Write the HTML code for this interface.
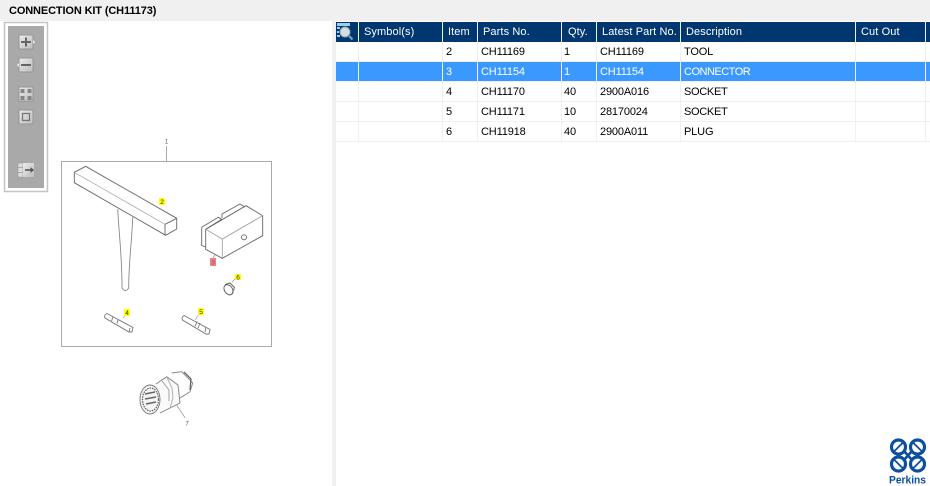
<!DOCTYPE html>
<html>
<head>
<meta charset="utf-8">
<style>
html,body{margin:0;padding:0;width:930px;height:486px;overflow:hidden;background:#f0f0f0;font-family:"Liberation Sans",sans-serif}
#title{position:absolute;left:9px;top:4px;font-size:11px;font-weight:bold;color:#000;white-space:nowrap;line-height:14px;letter-spacing:-.13px}
#left{position:absolute;left:0;top:21px;width:332px;height:465px;background:#fff}
#right{position:absolute;left:336px;top:21px;width:594px;height:465px;background:#fff}
svg{position:absolute;left:0;top:0}
.c{position:absolute;height:20px;line-height:20px;font-size:11px;white-space:nowrap;letter-spacing:-.15px;color:#000}
.h{color:#fff;font-size:11px;line-height:21px;letter-spacing:.1px;top:22px}
.s{color:#fff}
.b{position:absolute}
</style>
</head>
<body>
<div id="left"></div>
<div id="right"></div>
<div id="title">CONNECTION KIT (CH11173)</div>

<!-- table backgrounds -->
<div class="b" style="left:336px;top:22px;width:594px;height:20px;background:#003770"></div>
<div class="b" style="left:336px;top:62px;width:594px;height:19px;background:#3b98ff"></div>
<div class="b" style="left:336px;top:61px;width:594px;height:1px;background:#f0f0f0"></div>
<div class="b" style="left:336px;top:81px;width:594px;height:1px;background:#f0f0f0"></div>
<div class="b" style="left:336px;top:101px;width:594px;height:1px;background:#f0f0f0"></div>
<div class="b" style="left:336px;top:121px;width:594px;height:1px;background:#f0f0f0"></div>
<div class="b" style="left:336px;top:141px;width:594px;height:1px;background:#f0f0f0"></div>
<!-- column separators -->
<div class="b" style="left:358px;top:22px;width:1px;height:120px;background:#f0f0f0"></div>
<div class="b" style="left:442px;top:22px;width:1px;height:120px;background:#f0f0f0"></div>
<div class="b" style="left:477px;top:22px;width:1px;height:120px;background:#f0f0f0"></div>
<div class="b" style="left:561px;top:22px;width:1px;height:120px;background:#f0f0f0"></div>
<div class="b" style="left:596px;top:22px;width:1px;height:120px;background:#f0f0f0"></div>
<div class="b" style="left:680px;top:22px;width:1px;height:120px;background:#f0f0f0"></div>
<div class="b" style="left:855px;top:22px;width:1px;height:120px;background:#f0f0f0"></div>
<div class="b" style="left:925px;top:22px;width:1px;height:120px;background:#f0f0f0"></div>

<!-- header -->
<div class="c h" style="left:364px">Symbol(s)</div>
<div class="c h" style="left:448px">Item</div>
<div class="c h" style="left:483px">Parts No.</div>
<div class="c h" style="left:568px">Qty.</div>
<div class="c h" style="left:602px">Latest Part No.</div>
<div class="c h" style="left:686px">Description</div>
<div class="c h" style="left:861px">Cut Out</div>

<!-- rows -->
<div class="c" style="left:446px;top:42px">2</div><div class="c" style="left:481px;top:42px">CH11169</div><div class="c" style="left:564px;top:42px">1</div><div class="c" style="left:600px;top:42px">CH11169</div><div class="c" style="left:684px;top:42px">TOOL</div>
<div class="c s" style="left:446px;top:62px">3</div><div class="c s" style="left:481px;top:62px">CH11154</div><div class="c s" style="left:564px;top:62px">1</div><div class="c s" style="left:600px;top:62px">CH11154</div><div class="c s" style="left:684px;top:62px;letter-spacing:-.5px">CONNECTOR</div>
<div class="c" style="left:446px;top:82px">4</div><div class="c" style="left:481px;top:82px">CH11170</div><div class="c" style="left:564px;top:82px">40</div><div class="c" style="left:600px;top:82px">2900A016</div><div class="c" style="left:684px;top:82px;letter-spacing:-.3px">SOCKET</div>
<div class="c" style="left:446px;top:102px">5</div><div class="c" style="left:481px;top:102px">CH11171</div><div class="c" style="left:564px;top:102px">10</div><div class="c" style="left:600px;top:102px">28170024</div><div class="c" style="left:684px;top:102px;letter-spacing:-.3px">SOCKET</div>
<div class="c" style="left:446px;top:122px">6</div><div class="c" style="left:481px;top:122px">CH11918</div><div class="c" style="left:564px;top:122px">40</div><div class="c" style="left:600px;top:122px">2900A011</div><div class="c" style="left:684px;top:122px">PLUG</div>

<svg width="930" height="486" viewBox="0 0 930 486" xmlns="http://www.w3.org/2000/svg">
<defs>
<linearGradient id="btn" x1="0" y1="0" x2="1" y2="1"><stop offset="0" stop-color="#ececec"/><stop offset="1" stop-color="#bdbdbd"/></linearGradient>
</defs>
<!-- search icon in header -->
<rect x="337" y="23" width="13" height="3" fill="#9fd0f0"/>
<rect x="337" y="27" width="3" height="2" fill="#9fd0f0"/>
<rect x="337" y="31" width="2" height="2" fill="#9fd0f0"/>
<rect x="337" y="35" width="3" height="2" fill="#9fd0f0"/>
<circle cx="345" cy="32" r="5" fill="#d8dde0" stroke="#8fa5b5"/>
<path d="M349 36l3.500 3.500" stroke="#6fa8d0" stroke-width="2"/>

<!-- toolbar -->
<rect x="4.500" y="22.500" width="43" height="169" fill="#fff" stroke="#c4c4c4" stroke-width="1.500"/>
<rect x="8" y="26" width="36" height="162" fill="#a9a9a9"/>
<g stroke="#959595" fill="url(#btn)">
<rect x="19" y="35" width="14" height="14" rx="1"/>
<rect x="19" y="58" width="14" height="14" rx="1"/>
<rect x="19" y="87" width="14" height="14"/>
<rect x="19" y="110" width="14" height="14"/>
</g>
<path d="M33 40l2 2-2 2z" fill="#eee"/>
<path d="M19 63l-2 2 2 2z" fill="#eee"/>
<path d="M21 42h10M26 37.500v9" stroke="#666" stroke-width="2" fill="none"/>
<path d="M21 65h10" stroke="#666" stroke-width="2" fill="none"/>
<g fill="#858585"><rect x="20.500" y="89" width="4" height="4"/><rect x="27.500" y="89" width="4" height="4"/><rect x="20.500" y="96" width="4" height="4"/><rect x="27.500" y="96" width="4" height="4"/></g>
<rect x="22.500" y="113.500" width="7" height="7" fill="none" stroke="#777" stroke-width="1.300"/>
<rect x="18" y="163" width="5" height="14" fill="#ddd" stroke="#999" stroke-width=".6"/>
<path d="M18 167.500h5M18 172.500h5" stroke="#999" stroke-width=".8"/>
<rect x="23" y="163" width="11" height="14" fill="url(#btn)"/>
<path d="M25 170h7" stroke="#555" stroke-width="1.600"/>
<path d="M30.500 167l3.500 3-3.500 3z" fill="#555"/>

<!-- drawing frame -->
<rect x="61.500" y="161.500" width="210" height="185" fill="none" stroke="#aaa"/>
<path d="M166.500 146v15" stroke="#aaa"/>
<g font-family="Liberation Sans,sans-serif" font-size="6.500" fill="#666" text-anchor="middle">
<text x="166.500" y="143.500">1</text>
<text x="187" y="425.500">7</text>
</g>

<!-- T tool -->
<g fill="none" stroke="#666" stroke-width=".9">
<path d="M74.300 172.300L85.700 166.300 176.700 218.300V229L165.700 235.300 74.300 182.700Z"/>
<path d="M165 224.300L176.700 218.300"/>
<path d="M165 224.300V235"/>
<path d="M117.700 209C119 235 122 255 122 288Q125.300 293 128.700 288C128.700 262 132 240 132.700 217.300" stroke="#888"/>
</g>
<path d="M74.300 172.300L165 224.300" stroke="#aaa" stroke-width=".8" fill="none"/>

<!-- connector block -->
<g fill="none" stroke="#666" stroke-width=".9">
<path d="M205.700 229.300L246 205.700 262.700 215.700V235.700L222.300 258.300 205.700 249.300Z"/>
<path d="M201.700 227.300L218.300 217.300 221.700 219.300 205.700 229.300M201.700 227.300V245.500L205.700 247"/>
<path d="M222 218V214L240 204 245 207"/>
<circle cx="244" cy="237.300" r="2.500"/>
</g>
<path d="M205.700 229.300L222.300 239 262.700 215.700M222.300 239V258" stroke="#999" stroke-width=".8" fill="none"/>
<path d="M213 258l2-3" stroke="#777" stroke-width=".6"/>

<!-- plug 6 -->
<g fill="none" stroke="#666" stroke-width="1">
<ellipse cx="228.500" cy="289.800" rx="4" ry="5.500" transform="rotate(-35 228.500 289.800)"/>
<path d="M225 284.500L230 283 234.500 287.500 232 294"/>
<path d="M232 282l3-3" stroke="#888" stroke-width=".6"/>
</g>

<!-- pins -->
<g fill="none" stroke="#777" stroke-width=".9">
<path d="M107 313.500L133 327.500 132 332 129 332 105 318Q103.500 315 107 313.500Z"/>
<path d="M113 317l-1.500 4M118 320l-1 3.500M130 328l-1 4"/>
<path d="M184 315.500L210 329.500 209 334 206 334 182.500 320Q181 317 184 315.500Z"/>
<path d="M197 321.500l-2 5M200 323l-2 5M206 327l-1 5"/>
<path d="M126 314l-3 4M199 314l-4 6" stroke="#888" stroke-width=".6"/>
</g>

<!-- connector 7 -->
<g fill="none" stroke="#808080" stroke-width=".9">
<path d="M171.700 373L181.700 371.700 192.700 383 190 391.700 180 398" fill="#fff"/>
<path d="M184 372L191 379 190 390" stroke="#666" stroke-width="1.300"/>
<path d="M156 384L166.700 376.700 178 385 180 403 160 413" fill="#fafafa"/>
<path d="M166.700 376.700L172 388 173 398 170 408" stroke="#aaa"/>
<path d="M162 381L169 390 169 401" stroke="#999"/>
<ellipse cx="150" cy="399.500" rx="10" ry="14.500" fill="#f4f4f4" stroke="#777"/>
<ellipse cx="150.500" cy="399.500" rx="8" ry="11.500" stroke-dasharray="1.500 1" stroke="#666" stroke-width="1.300"/>
<path d="M145 394l10-2M145 399l11-2M146 404l10-2" stroke="#666" stroke-width="1.600"/>
<path d="M176.700 405l8.500 13" stroke="#999" stroke-width=".7"/>
</g>

<!-- callouts -->
<g font-family="Liberation Sans,sans-serif" font-size="6.500" fill="#333" text-anchor="middle">
<rect x="159" y="198" width="6" height="7" fill="#ffff00"/><text x="162" y="204">2</text>
<rect x="210" y="258" width="6" height="8" fill="#f47f7f"/><text x="213" y="264.500" fill="#666">3</text>
<rect x="235" y="274" width="6" height="6" fill="#ffff00"/><text x="238" y="279.500">6</text>
<rect x="124" y="309" width="6" height="7" fill="#ffff00"/><text x="127" y="315">4</text>
<rect x="198" y="308" width="6" height="7" fill="#ffff00"/><text x="201" y="314">5</text>
</g>

<!-- Perkins logo -->
<g fill="none" stroke="#0d4f9f">
<g stroke-width="3.200">
<circle cx="898.500" cy="447" r="7"/>
<circle cx="917.500" cy="447" r="7"/>
<circle cx="898.500" cy="464" r="7"/>
<circle cx="917.500" cy="464" r="7"/>
</g>
<path d="M894 451.500L903 442.500M913 442.500L922 451.500M894 459.500L903 468.500M913 468.500L922 459.500" stroke-width="1.800"/>
<path d="M904 451L912 460M912 451L904 460" stroke-width="2.600"/>
</g>
<text x="889" y="483.500" font-family="Liberation Sans,sans-serif" font-size="11" font-weight="bold" fill="#0d4f9f" textLength="37" lengthAdjust="spacingAndGlyphs">Perkins</text>
</svg>
</body>
</html>
